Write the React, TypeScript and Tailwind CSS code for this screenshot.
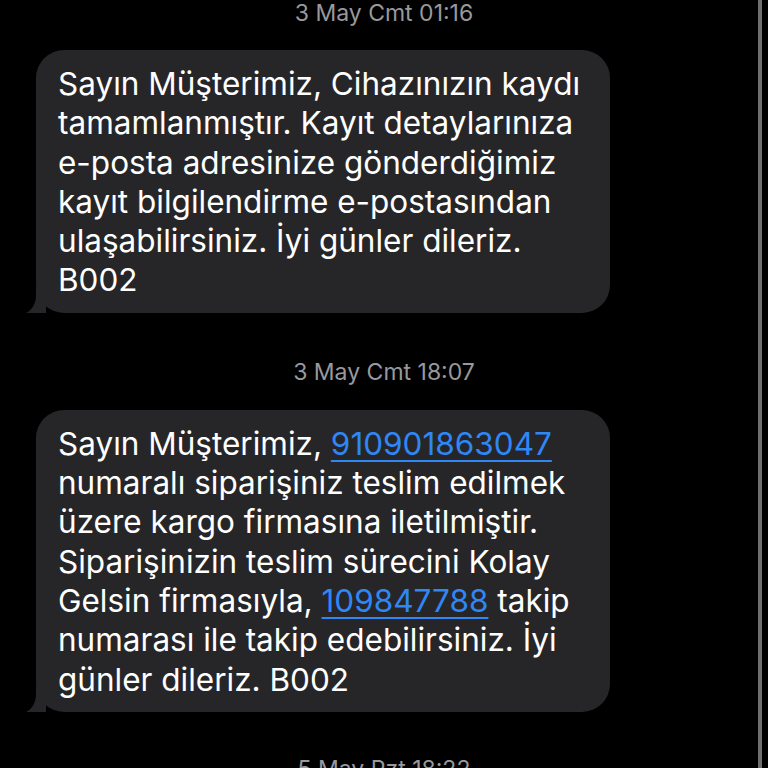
const FONT = { fontFamily: 'Inter, "Noto Sans", sans-serif' }

function Stamp({ children }: { children: React.ReactNode }) {
  return (
    <div className="text-center text-[23px] leading-[26px] text-[#98989d]">{children}</div>
  )
}

function Link({ children }: { children: React.ReactNode }) {
  return <span className="text-[#2f87f6] underline decoration-[2px] underline-offset-[5px]">{children}</span>
}

function Tail() {
  return (
    <svg
      className="absolute bottom-0 left-[-10px]"
      width="30"
      height="26"
      viewBox="0 0 30 26"
    >
      <path d="M10 0 L20 0 L20 26 L0 26 C6 23 10 17 10 8 Z" fill="#262628" />
    </svg>
  )
}

function Bubble({ lines }: { lines: React.ReactNode[] }) {
  return (
    <div className="relative ml-[36px] w-[574px]">
      <div className="rounded-[28px] bg-[#262628] pl-[22px] pr-4 pt-[14px] pb-[13px] text-[31.5px] leading-[39.3px] text-white">
        {lines.map((l, i) => (
          <div key={i} className="whitespace-nowrap">
            {l}
          </div>
        ))}
      </div>
      <Tail />
    </div>
  )
}

export default function App() {
  return (
    <div className="relative h-[768px] w-[768px] overflow-hidden bg-black" style={FONT}>
      <div className="flex flex-col">
        <Stamp>3 May Cmt 01:16</Stamp>
        <div className="mt-[24px]">
          <Bubble
            lines={[
              'Sayın Müşterimiz, Cihazınızın kaydı',
              'tamamlanmıştır. Kayıt detaylarınıza',
              'e-posta adresinize gönderdiğimiz',
              'kayıt bilgilendirme e-postasından',
              'ulaşabilirsiniz. İyi günler dileriz.',
              'B002',
            ]}
          />
        </div>
        <div className="mt-[46px]">
          <Stamp>3 May Cmt 18:07</Stamp>
        </div>
        <div className="mt-[25px]">
          <Bubble
            lines={[
              <>
                Sayın Müşterimiz, <Link>910901863047</Link>
              </>,
              'numaralı siparişiniz teslim edilmek',
              'üzere kargo firmasına iletilmiştir.',
              'Siparişinizin teslim sürecini Kolay',
              <>
                Gelsin firmasıyla, <Link>109847788</Link> takip
              </>,
              'numarası ile takip edebilirsiniz. İyi',
              'günler dileriz. B002',
            ]}
          />
        </div>
        <div className="mt-[44px]">
          <Stamp>5 May Pzt 18:22</Stamp>
        </div>
      </div>
      <div className="absolute right-[6px] top-0 h-full w-[4px] bg-[#6e6e70]" />
    </div>
  )
}
